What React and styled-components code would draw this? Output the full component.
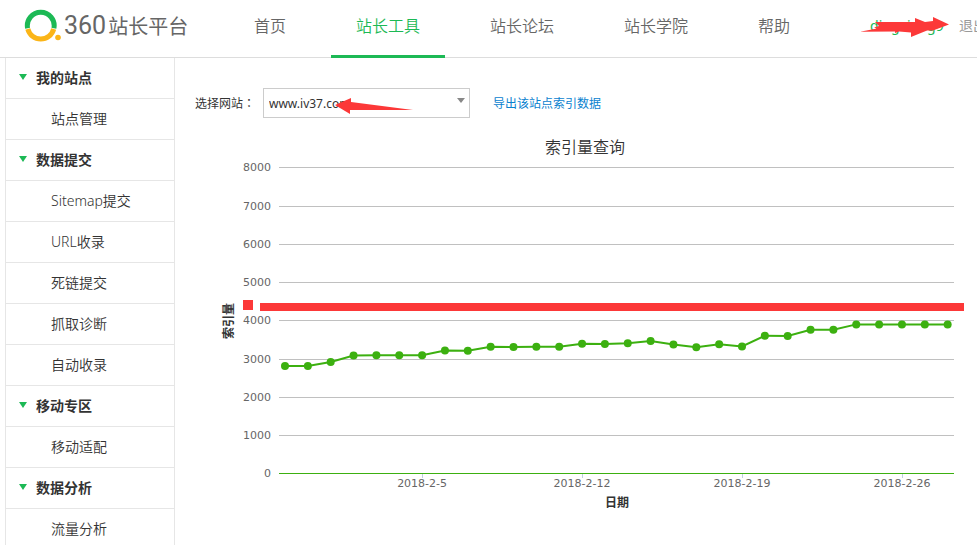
import React, { useState } from 'react';
import styled, { createGlobalStyle } from 'styled-components';

const GlobalStyle = createGlobalStyle`
  * {
    box-sizing: border-box;
  }

  body {
    margin: 0;
    background: #fff;
    color: #333;
    font-family: 'Noto Sans', 'Noto Sans CJK SC', sans-serif;
    font-size: 14px;
  }

  a {
    text-decoration: none;
  }
`;

const Page = styled.div`
  min-height: 100vh;
  overflow: hidden;
`;

const Header = styled.header`
  display: flex;
  height: 58px;
  padding-left: 24px;
  border-bottom: 1px solid #ddd;
  white-space: nowrap;
`;

const Logo = styled.a`
  display: flex;
  flex: none;
  align-items: center;
  width: 205px;
  height: 51px;
  color: #666;
  font-size: 20px;

  svg {
    margin-right: 2px;
  }

  .number {
    margin-right: 2px;
    font-family: Roboto, sans-serif;
    font-size: 25px;
  }
`;

const Nav = styled.nav`
  display: flex;
  flex: none;
  gap: 20px;
`;

const NavLink = styled.a`
  height: 58px;
  padding: 0 25px;
  border-bottom: 3px solid ${({ $active }) => ($active ? '#1cb955' : 'transparent')};
  color: ${({ $active }) => ($active ? '#1cb955' : '#666')};
  font-size: 16px;
  font-weight: 350;
  line-height: 52px;
`;

const UserArea = styled.div`
  position: relative;
  display: flex;
  flex: none;
  margin-left: 55px;
  font-size: 14px;
  line-height: 52px;

  .user {
    width: 89px;
    color: #1cb955;
  }

  .logout {
    color: #999;
  }

  svg {
    position: absolute;
    top: 14px;
    left: -10px;
  }
`;

const Body = styled.div`
  display: flex;
  padding-left: 5px;
`;

const Sidebar = styled.aside`
  flex: none;
  width: 170px;
  border: solid #e6e6e6;
  border-width: 0 1px;
`;

const MenuTitle = styled.button`
  display: flex;
  align-items: center;
  width: 100%;
  height: 41px;
  padding: 0 0 2px 13px;
  border: 0;
  border-bottom: 1px solid #e6e6e6;
  background: none;
  color: #333;
  font: inherit;
  font-weight: bold;
  text-align: left;

  svg {
    margin-right: 9px;
  }
`;

const MenuLink = styled.a`
  display: block;
  height: 41px;
  padding-left: 45px;
  border-bottom: 1px solid #e6e6e6;
  color: #333;
  font-weight: 350;
  line-height: 40px;
`;

const Main = styled.main`
  flex: 1;
  min-width: 0;
  padding: 30px 10px 0 20px;
`;

const Toolbar = styled.div`
  display: flex;
  align-items: center;
  height: 30px;
  margin-bottom: 10px;
  font-size: 12px;

  label {
    width: 68px;
  }

  .colon {
    font-family: 'Noto Sans CJK TC', sans-serif;
  }

  a {
    margin-left: 23px;
    color: #0a82cf;
  }
`;

const SelectBox = styled.div`
  position: relative;
  width: 207px;

  select {
    width: 100%;
    height: 30px;
    padding: 0 20px 0 5px;
    border: 1px solid #ccc;
    border-radius: 0;
    background: #fff;
    color: #333;
    font: inherit;
    appearance: none;
  }

  svg {
    position: absolute;
    pointer-events: none;
  }

  .caret {
    top: 10px;
    right: 5px;
  }

  .mark {
    top: 10px;
    left: 72px;
  }
`;

const ChartSvg = styled.svg`
  display: block;
  width: 100%;
  height: auto;

  .title {
    fill: #333;
    font-size: 16px;
    font-weight: 350;
  }

  .axis-title {
    fill: #333;
    font-size: 12px;
    font-weight: bold;
  }

  .tick-label {
    fill: #666;
    font-family: 'DejaVu Sans', sans-serif;
    font-size: 11px;
  }
`;

const NAV = ['首页', '站长工具', '站长论坛', '站长学院', '帮助'];

const MENU = [
  { title: '我的站点', items: ['站点管理'] },
  {
    title: '数据提交',
    items: ['Sitemap提交', 'URL收录', '死链提交', '抓取诊断', '自动收录'],
  },
  { title: '移动专区', items: ['移动适配'] },
  { title: '数据分析', items: ['流量分析'] },
];

const VALUES = [
  2800, 2795, 2900, 3070, 3080, 3080, 3080, 3200, 3195, 3300,
  3295, 3300, 3300, 3380, 3375, 3390, 3450, 3360, 3285, 3365,
  3310, 3590, 3580, 3745, 3745, 3885, 3885, 3885, 3880, 3880,
];

const DATES = [
  { index: 6, label: '2018-2-5' },
  { index: 13, label: '2018-2-12' },
  { index: 20, label: '2018-2-19' },
  { index: 27, label: '2018-2-26' },
];

const PLOT = { left: 84, right: 759, bottom: 345, height: 306, max: 8000 };

const getX = i => 90 + i * 22.85;
const getY = value => PLOT.bottom - (value / PLOT.max) * PLOT.height;

const IndexChart = () => (
  <ChartSvg viewBox="0 0 772 400" role="img" aria-label="索引量查询">
    <text className="title" x="390" y="25" textAnchor="middle">
      索引量查询
    </text>
    {[...Array(9).keys()].map(i => {
      const y = Math.ceil(getY(i * 1000));
      return (
        <g key={i}>
          <rect
            x={PLOT.left}
            y={y}
            width={PLOT.right - PLOT.left}
            height="1"
            fill={i === 0 ? '#3cb010' : '#c0c0c0'}
          />
          <text className="tick-label" x="76" y={y + 4} textAnchor="end">
            {i * 1000}
          </text>
        </g>
      );
    })}
    {DATES.map(({ index, label }) => (
      <g key={label}>
        <rect
          x={Math.round(getX(index))}
          y={PLOT.bottom + 1}
          width="1"
          height="4"
          fill="#c0d0e0"
        />
        <text
          className="tick-label"
          x={getX(index)}
          y="359"
          textAnchor="middle"
        >
          {label}
        </text>
      </g>
    ))}
    <text className="axis-title" x="422" y="379" textAnchor="middle">
      日期
    </text>
    <text
      className="axis-title"
      transform="translate(38 193) rotate(-90)"
      textAnchor="middle"
    >
      索引量
    </text>
    <polyline
      points={VALUES.map((v, i) => `${getX(i)},${getY(v)}`).join(' ')}
      fill="none"
      stroke="#3cb010"
      strokeWidth="2"
    />
    {VALUES.map((v, i) => (
      <circle key={i} cx={getX(i)} cy={getY(v)} r="4" fill="#3cb010" />
    ))}
    <rect x="48" y="172" width="10" height="10" fill="#fc3838" />
    <rect x="65" y="175" width="704" height="8" fill="#fc3838" />
  </ChartSvg>
);

const App = () => {
  const [site, setSite] = useState('www.iv37.com');

  return (
    <>
      <GlobalStyle />
      <Page>
        <Header>
          <Logo href="#">
            <svg width="38" height="34" viewBox="0 0 38 34">
              <path
                d="M3.6 19.2A13.4 13.4 0 1 1 29.9 19.2"
                fill="none"
                stroke="#1cb955"
                strokeWidth="5"
              />
              <path
                d="M3.8 20A13.4 13.4 0 0 0 29.7 20"
                fill="none"
                stroke="#fbb518"
                strokeWidth="5"
              />
              <circle cx="34" cy="28.5" r="2.8" fill="#fbb518" />
            </svg>
            <span className="number">360</span>
            <span>站长平台</span>
          </Logo>
          <Nav>
            {NAV.map(name => (
              <NavLink key={name} href="#" $active={name === '站长工具'}>
                {name}
              </NavLink>
            ))}
          </Nav>
          <UserArea>
            <a className="user" href="#">
              dingxiang9
            </a>
            <a className="logout" href="#">
              退出
            </a>
            <svg width="90" height="26" viewBox="0 0 90 26">
              <path
                d="M0 17.7L17 14.5L14 13.5L19 12L15 8H55V4L65 8L73 7V3L89 10.5L73 16.5L67 16.5L51 23V18.5L39 17.5L35 19V17.5Z"
                fill="#fc3838"
              />
            </svg>
          </UserArea>
        </Header>
        <Body>
          <Sidebar>
            {MENU.map(({ title, items }) => (
              <div key={title}>
                <MenuTitle type="button">
                  <svg width="8" height="6" viewBox="0 0 8 6">
                    <path d="M0 0H8L4 6Z" fill="#1cb955" />
                  </svg>
                  {title}
                </MenuTitle>
                {items.map(item => (
                  <MenuLink key={item} href="#">
                    {item}
                  </MenuLink>
                ))}
              </div>
            ))}
          </Sidebar>
          <Main>
            <Toolbar>
              <label htmlFor="site">
                选择网站<span className="colon">：</span>
              </label>
              <SelectBox>
                <select
                  id="site"
                  value={site}
                  onChange={e => setSite(e.target.value)}
                >
                  <option value="www.iv37.com">www.iv37.com</option>
                </select>
                <svg className="caret" width="8" height="5" viewBox="0 0 8 5">
                  <path d="M0 0H8L4 5Z" fill="#888" />
                </svg>
                <svg className="mark" width="78" height="16" viewBox="0 0 78 16">
                  <path d="M0 7L16 0V4L78 12L15 12V16Z" fill="#fc3838" />
                </svg>
              </SelectBox>
              <a href="#">导出该站点索引数据</a>
            </Toolbar>
            <IndexChart />
          </Main>
        </Body>
      </Page>
    </>
  );
};

export default App;
